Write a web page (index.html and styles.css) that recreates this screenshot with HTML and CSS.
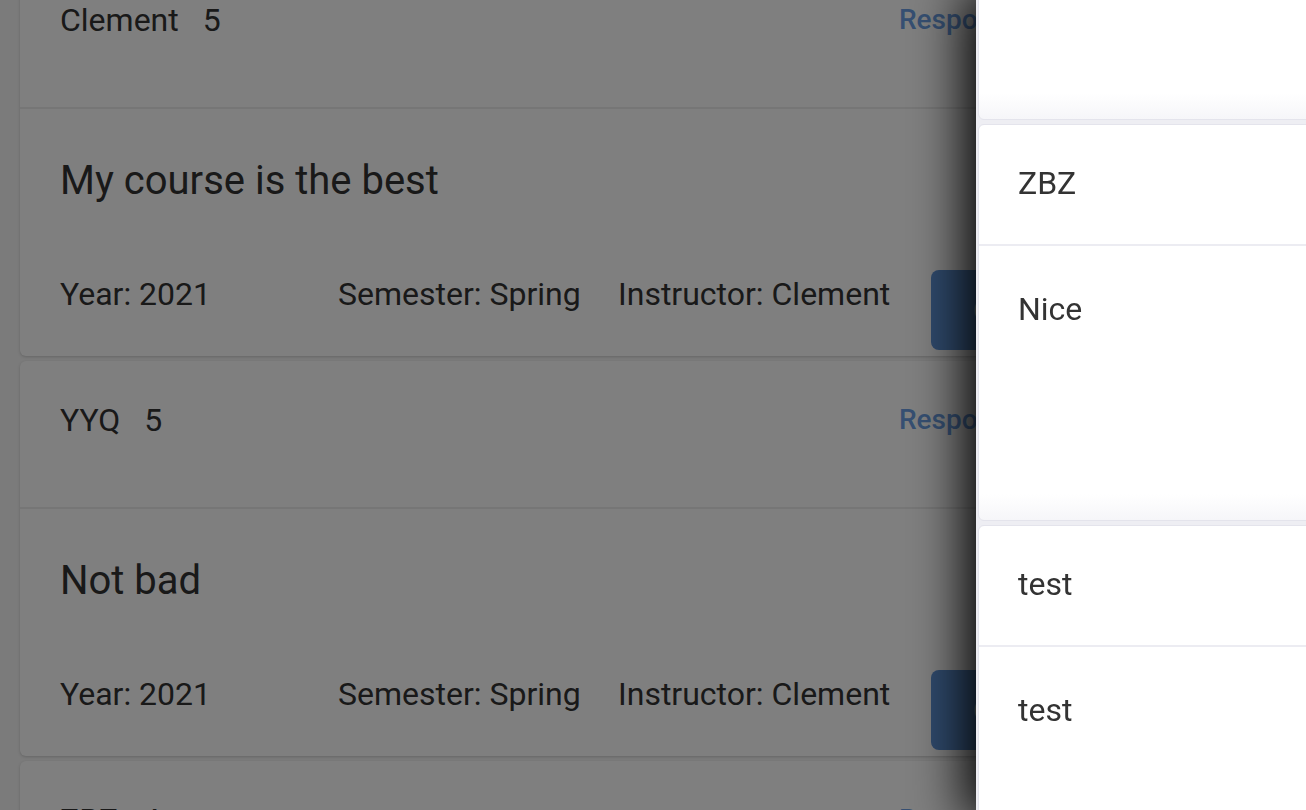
FILE: index.html
```html
<!DOCTYPE html>
<html lang="en">
<head>
<meta charset="utf-8">
<title>Course reviews</title>
<link rel="stylesheet" href="styles.css">
</head>
<body>
<main class="list">
  <article class="card">
    <header class="card-head">
      <div class="author"><span class="name">Clement</span><span class="score">5</span></div>
      <a class="link">Responses</a>
    </header>
    <section class="card-body">
      <h2 class="title">My course is the best</h2>
      <div class="info">
        <span class="year">Year: 2021</span>
        <span class="sem">Semester: Spring</span>
        <span class="inst">Instructor: Clement</span>
        <button class="btn">Comment</button>
      </div>
    </section>
  </article>
  <article class="card">
    <header class="card-head">
      <div class="author"><span class="name">YYQ</span><span class="score">5</span></div>
      <a class="link">Responses</a>
    </header>
    <section class="card-body">
      <h2 class="title">Not bad</h2>
      <div class="info">
        <span class="year">Year: 2021</span>
        <span class="sem">Semester: Spring</span>
        <span class="inst">Instructor: Clement</span>
        <button class="btn">Comment</button>
      </div>
    </section>
  </article>
  <article class="card">
    <header class="card-head">
      <div class="author"><span class="name">ZBZ</span><span class="score">4</span></div>
      <a class="link">Responses</a>
    </header>
    <section class="card-body">
      <h2 class="title">Good</h2>
    </section>
  </article>
</main>
<div class="overlay"></div>
<aside class="drawer">
  <div class="dcard dcard-top"></div>
  <div class="dcard">
    <div class="dhead">ZBZ</div>
    <div class="dbody">Nice</div>
  </div>
  <div class="dcard">
    <div class="dhead">test</div>
    <div class="dbody">test</div>
  </div>
</aside>
</body>
</html>
```

FILE: styles.css
```css
* { box-sizing: border-box; }

html, body {
  margin: 0;
  height: 100%;
  overflow: hidden;
}

body {
  background: #f6f6f6;
  font-family: Roboto, "Liberation Sans", sans-serif;
  color: #333;
}

.list {
  display: flex;
  flex-direction: column;
  gap: 5px;
  padding: 0 20px;
  margin-top: -39px;
}

.card {
  background: #fff;
  border-radius: 6px;
  box-shadow: 0 1px 3px rgba(0, 0, 0, 0.18);
}

.card-head {
  height: 148px;
  padding: 41px 0 0 40px;
  display: flex;
  align-items: flex-start;
  border-bottom: 2px solid #ececec;
}

.author {
  width: 839px;
  display: flex;
  gap: 24px;
  font-size: 32px;
  line-height: 36px;
}

.link {
  font-size: 28px;
  font-weight: 500;
  line-height: 36px;
  color: #6c9fe4;
}

.card-body {
  padding: 42px 0 6px 40px;
}

.title {
  margin: 0;
  font-size: 40px;
  font-weight: 400;
  line-height: 60px;
}

.info {
  margin-top: 59px;
  display: flex;
  align-items: flex-start;
  font-size: 32px;
  line-height: 48px;
}

.year { width: 278px; }
.sem { width: 280px; }

.btn {
  margin-left: 41px;
  height: 80px;
  padding: 0 42px;
  border: 0;
  border-radius: 8px;
  background: #5f94d8;
  color: #fff;
  font-family: inherit;
  font-size: 28px;
  font-weight: 500;
}

.overlay {
  position: fixed;
  inset: 0;
  background: rgba(0, 0, 0, 0.5);
}

.drawer {
  position: fixed;
  top: 0;
  right: 0;
  bottom: 0;
  width: 330px;
  padding-left: 2px;
  background: #eeeef3;
  display: flex;
  flex-direction: column;
  gap: 4px;
  overflow: hidden;
  box-shadow: 0 0 50px 10px #000;
}

.dcard {
  flex: none;
  margin-right: -10px;
  background: linear-gradient(to bottom, #fff calc(100% - 26px), #f6f6f9);
  border: 1px solid #e4e4ec;
  border-radius: 6px;
  font-size: 32px;
  line-height: 38px;
  color: #333;
}

.dcard-top {
  height: 130px;
  margin-top: -10px;
}

.dhead {
  height: 121px;
  padding: 39px 0 0 39px;
  border-bottom: 2px solid #ececf2;
}

.dbody {
  height: 274px;
  padding: 44px 0 0 39px;
}
```
